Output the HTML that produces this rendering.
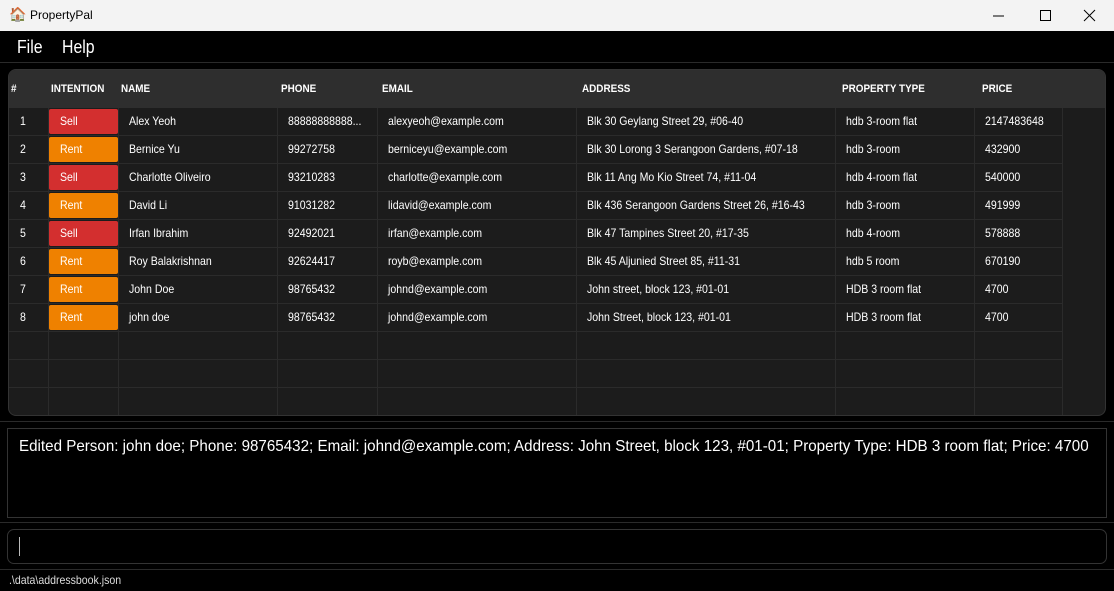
<!DOCTYPE html>
<html><head><meta charset="utf-8"><style>
*{margin:0;padding:0;box-sizing:border-box}
body{width:1114px;height:591px;background:#000;overflow:hidden;position:relative;font-family:"Liberation Sans",sans-serif;color:#fff}
.abs{position:absolute}
.n{display:inline-block;transform:scaleX(.88);transform-origin:0 50%}
#title{left:0;top:0;width:1114px;height:31px;background:#f3f3f3;color:#000;font-size:12px}
#menu{left:0;top:31px;width:1114px;height:32px;background:#000;border-bottom:1px solid #2a2a2a;font-size:18px}
#table{left:8px;top:69px;width:1098px;height:347px;background:#1c1c1c;border-radius:8px;overflow:hidden;border:1px solid #333}
.hdr{position:absolute;left:0;top:0;width:1098px;height:38px;background:#2e2e2e}
.h{position:absolute;top:13px;font-size:11px;font-weight:bold;color:#fff;transform:scaleX(.9);transform-origin:0 50%}
.row{position:absolute;left:0;width:1054px;height:28px;border-bottom:1px solid #2b2b2b}
.c{position:absolute;top:0;height:27px;line-height:27px;font-size:12px;border-right:1px solid #2b2b2b;white-space:nowrap;overflow:hidden}
.b{position:absolute;left:0;top:1px;width:69px;height:25px;border-radius:2px;font-size:12px;line-height:25px;padding-left:11px}
.sell{background:#d32f2f}.rent{background:#ef8100}
</style></head><body>
<div id="title" class="abs">
<span class="abs" style="left:9px;top:6px;font-size:14px">🏠</span>
<span class="abs" style="left:30px;top:8px">PropertyPal</span>
<svg class="abs" style="left:990px;top:9px" width="110" height="14"><line x1="3" y1="7" x2="14" y2="7" stroke="#000"/><rect x="50.5" y="1.5" width="10" height="10" fill="none" stroke="#000"/><path d="M94 1 L105 12 M105 1 L94 12" stroke="#000"/></svg>
</div>
<div id="menu" class="abs"><span class="abs n" style="left:17px;top:6px">File</span><span class="abs n" style="left:62px;top:6px">Help</span></div>
<div id="table" class="abs">
<div class="hdr">
<span class="h" style="left:2px">#</span><span class="h" style="left:42px">INTENTION</span><span class="h" style="left:112px">NAME</span><span class="h" style="left:272px">PHONE</span><span class="h" style="left:373px">EMAIL</span><span class="h" style="left:573px">ADDRESS</span><span class="h" style="left:833px">PROPERTY TYPE</span><span class="h" style="left:973px">PRICE</span>
</div>
<div id="rows"></div>
</div>
<div class="abs" style="left:0;top:421px;width:1114px;height:1px;background:#2a2a2a"></div>
<div class="abs" style="left:7px;top:428px;width:1100px;height:90px;border:1px solid #333;font-size:16px;padding:9px 11px;white-space:nowrap"><span id="res" style="display:inline-block;transform-origin:0 50%">Edited Person: john doe; Phone: 98765432; Email: johnd@example.com; Address: John Street, block 123, #01-01; Property Type: HDB 3 room flat; Price: 4700</span></div>
<div class="abs" style="left:0;top:522px;width:1114px;height:1px;background:#2a2a2a"></div>
<div class="abs" style="left:7px;top:529px;width:1100px;height:35px;border:1px solid #333;border-radius:7px"><div class="abs" style="left:11px;top:7px;width:1px;height:19px;background:#bbb"></div></div>
<div class="abs" style="left:0;top:569px;width:1114px;height:1px;background:#2a2a2a"></div>
<div class="abs n" style="left:9px;top:573px;font-size:12px;color:#ddd">.\data\addressbook.json</div>
<script>
var d=[["1","Sell","Alex Yeoh","88888888888...","alexyeoh@example.com","Blk 30 Geylang Street 29, #06-40","hdb 3-room flat","2147483648"],
["2","Rent","Bernice Yu","99272758","berniceyu@example.com","Blk 30 Lorong 3 Serangoon Gardens, #07-18","hdb 3-room","432900"],
["3","Sell","Charlotte Oliveiro","93210283","charlotte@example.com","Blk 11 Ang Mo Kio Street 74, #11-04","hdb 4-room flat","540000"],
["4","Rent","David Li","91031282","lidavid@example.com","Blk 436 Serangoon Gardens Street 26, #16-43","hdb 3-room","491999"],
["5","Sell","Irfan Ibrahim","92492021","irfan@example.com","Blk 47 Tampines Street 20, #17-35","hdb 4-room","578888"],
["6","Rent","Roy Balakrishnan","92624417","royb@example.com","Blk 45 Aljunied Street 85, #11-31","hdb 5 room","670190"],
["7","Rent","John Doe","98765432","johnd@example.com","John street, block 123, #01-01","HDB 3 room flat","4700"],
["8","Rent","john doe","98765432","johnd@example.com","John Street, block 123, #01-01","HDB 3 room flat","4700"],
null,null,null];
var cols=[[0,40],[40,70],[110,159],[269,100],[369,199],[568,259],[827,139],[966,88]];
var h="";
d.forEach(function(r,i){
 h+='<div class="row" style="top:'+(38+i*28)+'px">';
 cols.forEach(function(c,j){
  var t="";
  if(r){ if(j==1) t='<div class="b '+(r[1]=="Sell"?"sell":"rent")+'"><span class="n">'+r[1]+'</span></div>'; else t='<span class="n">'+r[j]+'</span>'; }
  var pad=j==0?11:10;
  h+='<div class="c" style="left:'+c[0]+'px;width:'+c[1]+'px;padding-left:'+(j==1?0:pad)+'px">'+t+'</div>';
 });
 h+='</div>';
});
document.getElementById("rows").innerHTML=h;
var e=document.getElementById("res");e.style.transform="scaleX("+(1070/e.offsetWidth)+")";
</script>
</body></html>
